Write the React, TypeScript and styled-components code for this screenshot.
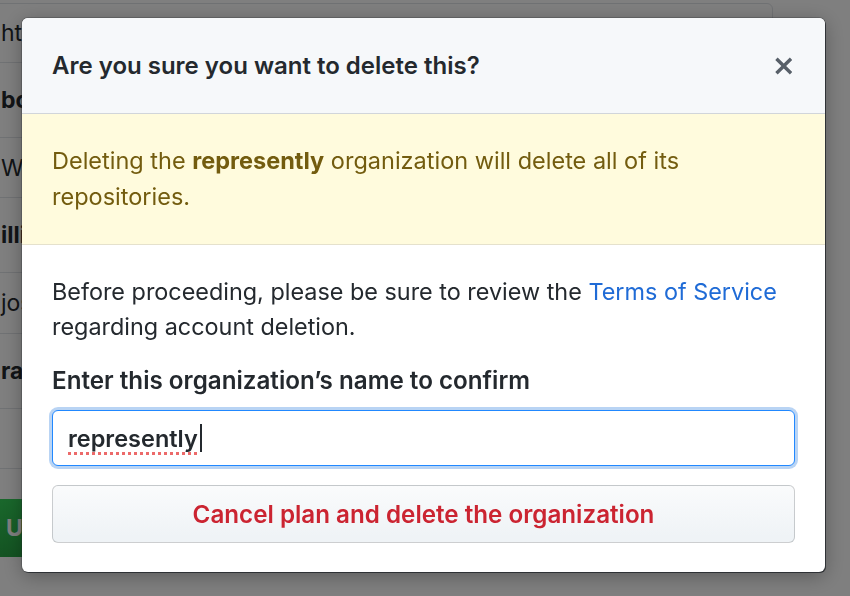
import React from "react";
import styled, { createGlobalStyle } from "styled-components";

const GlobalStyle = createGlobalStyle`
  html, body { margin: 0; padding: 0; }
  body {
    width: 850px;
    height: 596px;
    overflow: hidden;
    background: #ffffff;
    font-family: Inter, "Noto Sans", "Liberation Sans", sans-serif;
    color: #24292e;
  }
  * { box-sizing: border-box; }
`;

/* ---------- page behind the dialog ---------- */
const Page = styled.div`
  padding-top: 3px;
  margin-left: -40px;
  width: 813px;
`;

const ListBox = styled.div`
  border: 1px solid #e1e4e8;
  border-radius: 6px;
  background: #fff;
`;

const ListRow = styled.div<{ $h: number; $bold?: boolean }>`
  height: ${(p) => p.$h}px;
  display: flex;
  align-items: center;
  padding-left: 40px;
  font-size: 23px;
  font-weight: ${(p) => (p.$bold ? 700 : 400)};
  border-bottom: 1px solid #e1e4e8;
  &:last-child { border-bottom: none; }
`;

const GreenButton = styled.div`
  margin-top: 30px;
  width: 240px;
  height: 58px;
  border-radius: 6px;
  background: linear-gradient(#34d058, #28a745);
  color: #fff;
  font-size: 23px;
  font-weight: 700;
  display: flex;
  align-items: center;
  padding-left: 46px;
`;

const Overlay = styled.div`
  position: fixed;
  inset: 0;
  background: rgba(0, 0, 0, 0.5);
`;

/* ---------- dialog ---------- */
const Dialog = styled.div`
  position: fixed;
  left: 22px;
  top: 18px;
  width: 803px;
  background: #fff;
  border-radius: 6px;
  box-shadow: 1px 1px 0 rgba(30, 34, 38, 0.7), 0 0 0 1px rgba(30, 34, 38, 0.25),
    0 4px 20px rgba(0, 0, 0, 0.3);
  overflow: hidden;
`;

const Header = styled.div`
  height: 96px;
  padding: 0 30px 0 30px;
  display: flex;
  align-items: center;
  justify-content: space-between;
  background: #f6f8fa;
  border-bottom: 1px solid #d1d5da;
`;

const Title = styled.h3`
  margin: 0;
  font-size: 24px;
  font-weight: 600;
  color: #24292e;
`;

const CloseButton = styled.button`
  border: none;
  background: transparent;
  padding: 0;
  width: 22px;
  height: 26px;
  display: flex;
  align-items: center;
  justify-content: center;
  color: #586069;
`;

const Flash = styled.div`
  padding: 29px 30px;
  min-height: 131px;
  background: #fffbdd;
  color: #735c0f;
  font-size: 23.5px;
  line-height: 36px;
  border-bottom: 1px solid #e5e1cc;
`;

const Body = styled.div`
  padding: 29px 30px 29px 30px;
  display: flex;
  flex-direction: column;
`;

const Text = styled.p`
  margin: 0;
  font-size: 23.4px;
  line-height: 35px;
  color: #24292e;
`;

const Link = styled.a`
  color: #1f6bd6;
  text-decoration: none;
`;

const Label = styled.label`
  margin-top: 19px;
  font-size: 24.2px;
  line-height: 35px;
  font-weight: 600;
  color: #24292e;
`;

const InputBox = styled.div`
  margin-top: 12px;
  height: 56px;
  border: 1px solid #2188ff;
  border-radius: 6px;
  box-shadow: 0 0 0 3px rgba(3, 102, 214, 0.28);
  padding-left: 15px;
  display: flex;
  align-items: center;
  background: #fff;
`;

const InputValue = styled.span`
  font-size: 23.5px;
  font-weight: 600;
  color: #24292e;
  text-decoration: underline dotted #ec6a6a;
  text-decoration-thickness: 3px;
  text-underline-offset: 5px;
`;

const Caret = styled.span`
  width: 2px;
  height: 28px;
  margin-left: 2px;
  background: #24292e;
`;

const DangerButton = styled.button`
  margin-top: 19px;
  height: 58px;
  width: 100%;
  border: 1px solid rgba(27, 31, 35, 0.2);
  border-radius: 6px;
  background: linear-gradient(#fafbfc, #eff3f6 90%);
  color: #cb2431;
  font-family: inherit;
  font-size: 24.2px;
  font-weight: 600;
  cursor: pointer;
`;

const XIcon = () => (
  <svg width="19.5" height="26" viewBox="0 0 12 16" fill="currentColor" aria-hidden="true">
    <path
      fillRule="evenodd"
      d="M7.48 8l3.75 3.75-1.48 1.48L6 9.48l-3.75 3.75-1.48-1.48L4.52 8 .77 4.25l1.48-1.48L6 6.52l3.75-3.75 1.48 1.48L7.48 8z"
    />
  </svg>
);

export default function App() {
  const rows: { h: number; text: string; bold?: boolean }[] = [
    { h: 59, text: "htmlUrl" },
    { h: 75, text: "board", bold: true },
    { h: 60, text: "Webhooks" },
    { h: 75, text: "illing", bold: true },
    { h: 61, text: "joshua" },
    { h: 75, text: "ranking", bold: true },
    { h: 59, text: "" },
  ];
  return (
    <>
      <GlobalStyle />
      <Page>
        <ListBox>
          {rows.map((r, i) => (
            <ListRow key={i} $h={r.h} $bold={r.bold}>
              {r.text}
            </ListRow>
          ))}
        </ListBox>
        <GreenButton>Update</GreenButton>
      </Page>
      <Overlay />
      <Dialog role="dialog">
        <Header>
          <Title>Are you sure you want to delete this?</Title>
          <CloseButton aria-label="Close">
            <XIcon />
          </CloseButton>
        </Header>
        <Flash>
          Deleting the <strong>represently</strong> organization will delete all of its
          repositories.
        </Flash>
        <Body>
          <Text>
            Before proceeding, please be sure to review the <Link href="#">Terms of Service</Link>{" "}
            regarding account deletion.
          </Text>
          <Label>Enter this organization’s name to confirm</Label>
          <InputBox>
            <InputValue>represently</InputValue>
            <Caret />
          </InputBox>
          <DangerButton>Cancel plan and delete the organization</DangerButton>
        </Body>
      </Dialog>
    </>
  );
}
